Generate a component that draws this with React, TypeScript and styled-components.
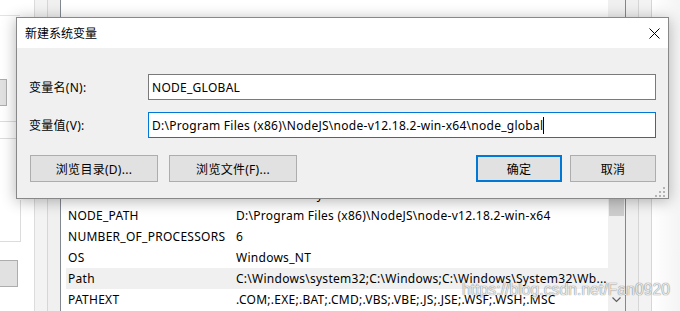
import React from "react";
import styled, { createGlobalStyle } from "styled-components";

const GlobalStyle = createGlobalStyle`
  html, body {
    margin: 0;
    padding: 0;
    background: #ffffff;
  }
  body {
    font-family: "Segoe UI", "Noto Sans", "Noto Sans CJK SC", sans-serif;
    font-size: 12px;
    letter-spacing: 0.27px;
    color: #000;
  }
`;

const rows = [
  { name: "DriverData", value: "C:\\Windows\\System32\\Drivers\\DriverData" },
  { name: "NODE_PATH", value: "D:\\Program Files (x86)\\NodeJS\\node-v12.18.2-win-x64" },
  { name: "NUMBER_OF_PROCESSORS", value: "6" },
  { name: "OS", value: "Windows_NT" },
  { name: "Path", value: "C:\\Windows\\system32;C:\\Windows;C:\\Windows\\System32\\Wb...", selected: true },
  { name: "PATHEXT", value: ".COM;.EXE;.BAT;.CMD;.VBS;.VBE;.JS;.JSE;.WSF;.WSH;.MSC" },
];

export default function App() {
  return (
    <Screen>
      <GlobalStyle />
      <Backdrop>
        <LeftCol>
          <TopRule />
          <StubButton $top={63} $width={7} />
          <ThinRule $top={15} />
          <ThinRule $top={16} />
          <GroupCorner />
          <StubButton $top={18} $width={18} />
        </LeftCol>
        <Strip $bg="#f3f3f3" />
        <Strip $bg="#f0f0f0" />
        <ListView>
          <ListRows>
            {rows.map((r) => (
              <ListRow key={r.name} $selected={!!r.selected}>
                <NameCell>{r.name}</NameCell>
                <ValueCell>{r.value}</ValueCell>
              </ListRow>
            ))}
          </ListRows>
          <ScrollBar>
            <Thumb $top={199} />
            <ArrowDown>
              <svg width="9" height="6" viewBox="0 0 9 6">
                <path d="M0.5 0.5 L4.5 4.5 L8.5 0.5" fill="none" stroke="#606060" strokeWidth="1.2" />
              </svg>
            </ArrowDown>
          </ScrollBar>
        </ListView>
        <Strip $bg="#f0f0f0" />
        <Strip $bg="#f3f3f3" />
        <RightCol />
      </Backdrop>

      <Watermark>https://blog.csdn.net/Fan0920</Watermark>

      <Dialog>
        <TitleBar>
          <Title>新建系统变量</Title>
          <CloseButton>
            <svg width="11" height="11" viewBox="0 0 11 11">
              <path d="M0.5 0.5 L10.5 10.5 M10.5 0.5 L0.5 10.5" stroke="#000" strokeWidth="1" />
            </svg>
          </CloseButton>
        </TitleBar>
        <Body>
          <Form>
            <Label>变量名(N):</Label>
            <TextBox>NODE_GLOBAL</TextBox>
            <Label>变量值(V):</Label>
            <TextBox $focused>
              D:\Program Files (x86)\NodeJS\node-v12.18.2-win-x64\node_global
              <Caret />
            </TextBox>
          </Form>
          <ButtonRow>
            <BrowseGroup>
              <Button $wide>浏览目录(D)...</Button>
              <Button $wide>浏览文件(F)...</Button>
            </BrowseGroup>
            <Spacer />
            <Button $primary>确定</Button>
            <Button>取消</Button>
          </ButtonRow>
          <Grip>
            <svg width="11" height="11" viewBox="0 0 11 11">
              {[
                [8, 0],
                [4, 4],
                [8, 4],
                [0, 8],
                [4, 8],
                [8, 8],
              ].map(([x, y]) => (
                <rect key={`${x}-${y}`} x={x} y={y} width="2" height="2" fill="#b4b4b4" />
              ))}
            </svg>
          </Grip>
        </Body>
      </Dialog>
    </Screen>
  );
}

const Screen = styled.div`
  position: relative;
  width: 680px;
  height: 311px;
  overflow: hidden;
  background: #fff;
`;

const Backdrop = styled.div`
  display: flex;
  height: 311px;
`;

const LeftCol = styled.div`
  width: 34px;
  border-right: 1px solid #dcdcdc;
  display: flex;
  flex-direction: column;
  background: #fff;
`;

const TopRule = styled.div`
  margin-top: 15px;
  width: 20px;
  height: 1px;
  background: #e3e3e3;
`;

const ThinRule = styled.div<{ $top: number }>`
  margin-top: ${(p) => p.$top}px;
  width: 20px;
  height: 1px;
  background: #dcdcdc;
`;

const StubButton = styled.div<{ $top: number; $width: number }>`
  margin-top: ${(p) => p.$top}px;
  width: ${(p) => p.$width}px;
  height: 27px;
  box-sizing: border-box;
  background: #e1e1e1;
  border: 1px solid #adadad;
  border-left: none;
  flex: none;
`;

const GroupCorner = styled.div`
  margin-top: 61px;
  width: 21px;
  height: 42px;
  box-sizing: border-box;
  border-right: 1px solid #dcdcdc;
  border-bottom: 1px solid #dcdcdc;
  flex: none;
`;

const Strip = styled.div<{ $bg: string }>`
  width: 12px;
  background: ${(p) => p.$bg};
  border-right: 1px solid #d6d6d6;
`;

const RightCol = styled.div`
  flex: 1;
  background: linear-gradient(to right, #ffffff, #f4f4f4);
`;

const ListView = styled.div`
  width: 564px;
  margin-left: -1px;
  border-left: 1px solid #828790;
  border-right: 1px solid #828790;
  display: flex;
  background: #fff;
`;

const ListRows = styled.div`
  flex: 1;
  display: flex;
  flex-direction: column;
  justify-content: flex-end;
  padding: 0 0 1px 5px;
  overflow: hidden;
`;

const ListRow = styled.div<{ $selected: boolean }>`
  display: flex;
  height: 21px;
  align-items: center;
  padding-left: 2px;
  white-space: nowrap;
  background: ${(p) => (p.$selected ? "#f0f0f0" : "transparent")};
`;

const NameCell = styled.div`
  width: 168px;
  flex: none;
`;

const ValueCell = styled.div`
  flex: 1;
  overflow: hidden;
`;

const ScrollBar = styled.div`
  width: 17px;
  background: #f0f0f0;
  display: flex;
  flex-direction: column;
  align-items: center;
`;

const Thumb = styled.div<{ $top: number }>`
  margin-top: ${(p) => p.$top}px;
  width: 15px;
  height: 17px;
  background: #cdcdcd;
`;

const ArrowDown = styled.div`
  margin-top: auto;
  height: 14px;
  display: flex;
  align-items: flex-start;
  justify-content: center;
`;

const Watermark = styled.div`
  position: absolute;
  left: 462px;
  top: 281px;
  font-family: "Liberation Sans", Arial, sans-serif;
  font-size: 15.8px;
  letter-spacing: 0;
  color: rgba(255, 255, 255, 0.85);
  text-shadow: 0 0 1px rgba(0, 0, 0, 0.5), 0 0 1px rgba(0, 0, 0, 0.3);
  white-space: nowrap;
  pointer-events: none;
`;

const Dialog = styled.div`
  position: absolute;
  left: 16px;
  top: 17px;
  width: 653px;
  height: 182px;
  box-sizing: border-box;
  border: 1px solid #888888;
  background: #f0f0f0;
  box-shadow: 0 2px 14px rgba(0, 0, 0, 0.3);
  display: flex;
  flex-direction: column;
`;

const TitleBar = styled.div`
  height: 30px;
  flex: none;
  background: #fff;
  display: flex;
  align-items: center;
  padding-left: 8px;
`;

const Title = styled.div`
  flex: 1;
  letter-spacing: 0;
`;

const CloseButton = styled.div`
  width: 28px;
  height: 30px;
  display: flex;
  align-items: center;
  justify-content: center;
`;

const Body = styled.div`
  position: relative;
  flex: 1;
  padding: 26px 12px 0 12px;
`;

const Form = styled.div`
  display: grid;
  grid-template-columns: 119px 508px;
  row-gap: 12px;
  align-items: center;
`;

const Label = styled.div`
  white-space: nowrap;
`;

const TextBox = styled.div<{ $focused?: boolean }>`
  height: 26px;
  box-sizing: border-box;
  background: #fff;
  border: 1px solid ${(p) => (p.$focused ? "#0078d7" : "#7a7a7a")};
  padding-left: 3px;
  display: flex;
  align-items: center;
  white-space: nowrap;
`;

const Caret = styled.span`
  display: inline-block;
  width: 1px;
  height: 17px;
  background: #000;
`;

const ButtonRow = styled.div`
  display: flex;
  margin-top: 17px;
  margin-left: 1px;
  gap: 8px;
`;

const BrowseGroup = styled.div`
  display: flex;
  gap: 11px;
`;

const Spacer = styled.div`
  flex: 1;
`;

const Button = styled.div<{ $wide?: boolean; $primary?: boolean }>`
  width: ${(p) => (p.$wide ? "128px" : "86px")};
  height: 27px;
  box-sizing: border-box;
  background: #e1e1e1;
  border: ${(p) => (p.$primary ? "2px solid #0078d7" : "1px solid #adadad")};
  display: flex;
  align-items: center;
  justify-content: center;
  white-space: nowrap;
`;

const Grip = styled.div`
  position: absolute;
  right: 2px;
  bottom: 2px;
  width: 11px;
  height: 11px;
`;
